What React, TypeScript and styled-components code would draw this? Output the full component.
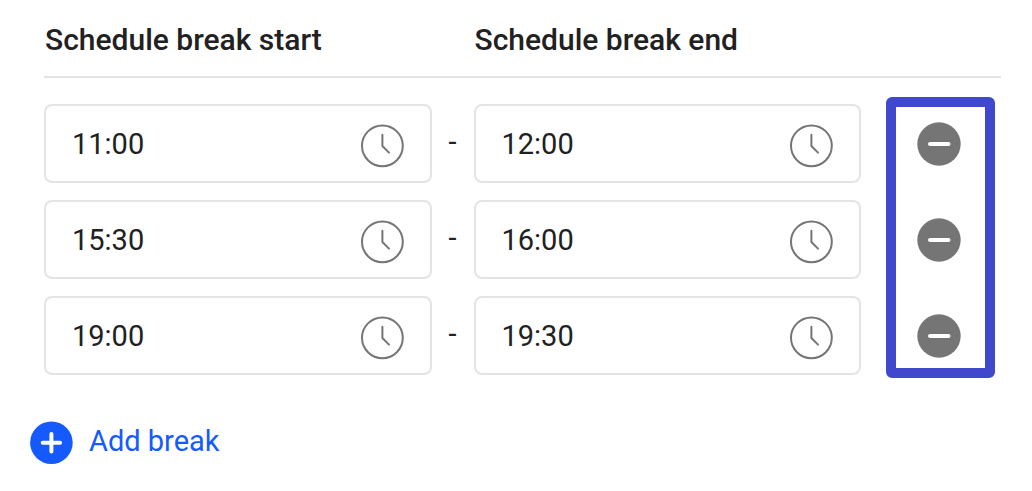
import React, { useState } from 'react';
import styled, { createGlobalStyle } from 'styled-components';

const GlobalStyle = createGlobalStyle`
  *, *::before, *::after {
    box-sizing: border-box;
  }

  body {
    margin: 0;
    background: #ffffff;
    color: #212121;
    font-family: Roboto, "Liberation Sans", sans-serif;
    font-size: 29px;
    line-height: 36px;
  }

  button, input {
    font: inherit;
    color: inherit;
  }
`;

const Page = styled.main`
  padding: 22px 31px 26px 44px;
`;

const HeaderRow = styled.header`
  display: grid;
  grid-template-columns: minmax(0, 1fr) 42px minmax(0, 1fr) 140px;
  padding-bottom: 18px;
  border-bottom: 2px solid #e4e4e4;
`;

const Heading = styled.h2<{ $column: number }>`
  grid-column: ${({ $column }) => $column};
  margin: 0;
  padding-left: 1px;
  font-size: 30px;
  font-weight: 500;
  white-space: nowrap;
`;

const Schedule = styled.section`
  display: flex;
  align-items: flex-start;
  gap: 25px;
  padding: 19px 6px 0 0;
`;

const BreakList = styled.div`
  flex: 1;
  min-width: 0;
  display: grid;
  gap: 17px;
  padding-top: 7px;
`;

const BreakRow = styled.div`
  display: grid;
  grid-template-columns: minmax(0, 1fr) 42px minmax(0, 1fr);
  align-items: center;
`;

const Field = styled.label`
  display: flex;
  align-items: center;
  height: 79px;
  padding: 0 26px;
  border: 2px solid #e4e4e4;
  border-radius: 8px;
  background: #ffffff;
`;

const TimeInput = styled.input`
  flex: 1;
  min-width: 0;
  height: 36px;
  padding: 0;
  border: 0;
  outline: none;
  background: transparent;
`;

const ClockSvg = styled.svg`
  flex: none;
  width: 44px;
  height: 49px;
  padding-top: 5px;
  fill: none;
  stroke: #757575;
  stroke-width: 2;
  stroke-linecap: round;
  stroke-linejoin: round;
`;

const Dash = styled.span`
  padding-bottom: 4px;
  text-align: center;
`;

const RemoveColumn = styled.div`
  display: flex;
  flex-direction: column;
  align-items: flex-start;
  gap: 52px;
  width: 109px;
  padding: 15px 21px 10px;
  border: 10px solid #4048cc;
  border-radius: 6px;
`;

const RoundButton = styled.button`
  display: block;
  padding: 0;
  border: 0;
  border-radius: 50%;
  background: transparent;
  cursor: pointer;
`;

const DiscSvg = styled.svg<{ $color: string }>`
  display: block;
  flex: none;
  width: 44px;
  height: 44px;
  fill: ${({ $color }) => $color};
  stroke-width: 4;
  stroke-linecap: round;
`;

const AddButton = styled.button`
  display: flex;
  align-items: center;
  gap: 16px;
  margin: 43px 0 0 -15px;
  padding: 0;
  border: 0;
  background: transparent;
  color: #155aff;
  cursor: pointer;
`;

const AddLabel = styled.span`
  padding-bottom: 4px;
`;

function ClockIcon() {
  return (
    <ClockSvg viewBox="0 0 44 44" aria-hidden="true">
      <circle cx="22.4" cy="21.8" r="20.4" />
      <path d="M22.4 10.8v11.2l6.6 6.6" />
    </ClockSvg>
  );
}

function MinusIcon() {
  return (
    <DiscSvg viewBox="0 0 44 44" $color="#757575" aria-hidden="true">
      <circle cx="22" cy="22" r="21.7" />
      <path d="M13 22h18.5" stroke="#ffffff" />
    </DiscSvg>
  );
}

function PlusIcon() {
  return (
    <DiscSvg viewBox="0 0 44 44" $color="#155aff" aria-hidden="true">
      <circle cx="22.4" cy="21.7" r="21.3" />
      <path d="M13.7 21.7h17.4M22.4 13v17.4" stroke="#ffffff" />
    </DiscSvg>
  );
}

interface TimeFieldProps {
  label: string;
  value: string;
  onChange: (value: string) => void;
}

function TimeField({ label, value, onChange }: TimeFieldProps) {
  return (
    <Field>
      <TimeInput
        type="text"
        aria-label={label}
        value={value}
        onChange={(event) => onChange(event.target.value)}
      />
      <ClockIcon />
    </Field>
  );
}

interface Break {
  id: number;
  start: string;
  end: string;
}

const initialBreaks: Break[] = [
  { id: 1, start: '11:00', end: '12:00' },
  { id: 2, start: '15:30', end: '16:00' },
  { id: 3, start: '19:00', end: '19:30' },
];

export default function App() {
  const [breaks, setBreaks] = useState(initialBreaks);

  const update = (id: number, change: Partial<Break>) =>
    setBreaks((list) => list.map((item) => (item.id === id ? { ...item, ...change } : item)));

  const remove = (id: number) => setBreaks((list) => list.filter((item) => item.id !== id));

  const add = () =>
    setBreaks((list) => [
      ...list,
      { id: Math.max(0, ...list.map((item) => item.id)) + 1, start: '', end: '' },
    ]);

  return (
    <>
      <GlobalStyle />
      <Page>
        <HeaderRow>
          <Heading $column={1}>Schedule break start</Heading>
          <Heading $column={3}>Schedule break end</Heading>
        </HeaderRow>
        <Schedule>
          <BreakList>
            {breaks.map((item) => (
              <BreakRow key={item.id}>
                <TimeField
                  label="Schedule break start"
                  value={item.start}
                  onChange={(start) => update(item.id, { start })}
                />
                <Dash>-</Dash>
                <TimeField
                  label="Schedule break end"
                  value={item.end}
                  onChange={(end) => update(item.id, { end })}
                />
              </BreakRow>
            ))}
          </BreakList>
          {breaks.length > 0 && (
            <RemoveColumn>
              {breaks.map((item) => (
                <RoundButton
                  key={item.id}
                  type="button"
                  aria-label="Remove break"
                  onClick={() => remove(item.id)}
                >
                  <MinusIcon />
                </RoundButton>
              ))}
            </RemoveColumn>
          )}
        </Schedule>
        <AddButton type="button" onClick={add}>
          <PlusIcon />
          <AddLabel>Add break</AddLabel>
        </AddButton>
      </Page>
    </>
  );
}
